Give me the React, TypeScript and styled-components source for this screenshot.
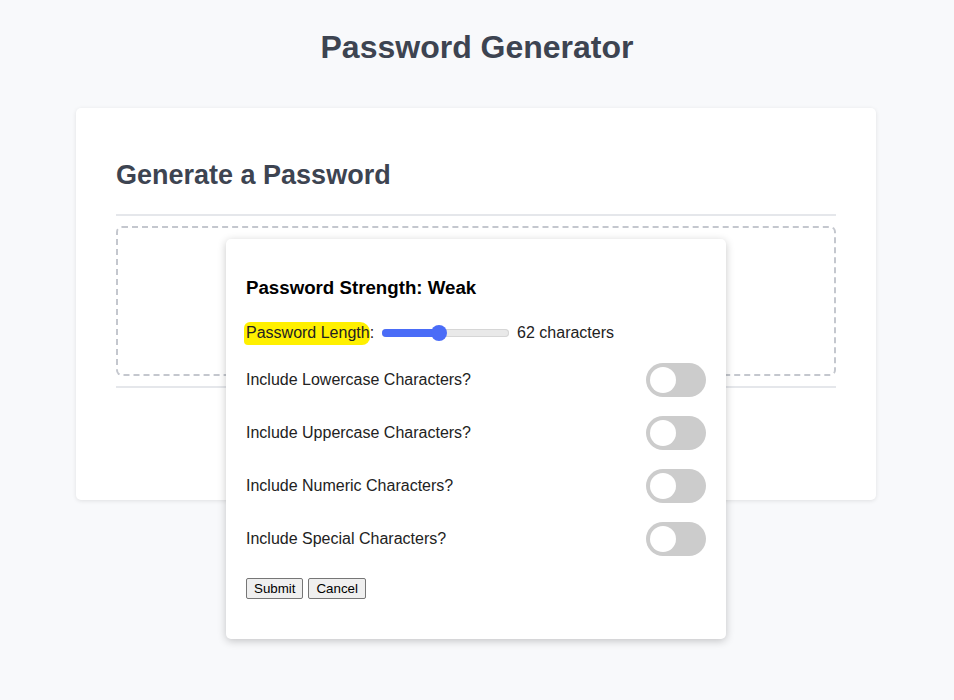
import React from "react";
import styled, { createGlobalStyle } from "styled-components";

const Global = createGlobalStyle`
  html, body { margin: 0; padding: 0; }
  body {
    background: #f8f9fb;
    font-family: "Liberation Sans", Arial, sans-serif;
    min-height: 700px;
  }
`;

const Page = styled.div`
  position: relative;
  min-height: 700px;
  padding-top: 28px;
  box-sizing: border-box;
`;

const Title = styled.h1`
  margin: 0 0 42px;
  text-align: center;
  font-size: 32px;
  line-height: 38px;
  font-weight: 700;
  color: #3d4451;
`;

const Card = styled.section`
  width: 800px;
  margin: 0 auto;
  background: #fff;
  border-radius: 5px;
  box-shadow: 0 1px 4px rgba(0, 0, 0, 0.1);
  padding: 50px 40px 112px;
  box-sizing: border-box;
  height: 392px;
  position: relative;
  left: -1px;
`;

const CardTitle = styled.h2`
  margin: 0 0 22px;
  font-size: 27px;
  line-height: 34px;
  font-weight: 700;
  color: #3d4451;
`;

const Rule = styled.hr`
  border: none;
  border-top: 2px solid #e5e7eb;
  margin: 0;
`;

const DropZone = styled.div`
  margin: 10px 0 10px;
  height: 150px;
  box-sizing: border-box;
  border: 2px dashed #c4c7ce;
  border-radius: 6px;
`;

const Dialog = styled.div`
  position: absolute;
  top: 239px;
  left: 226px;
  width: 500px;
  height: 400px;
  box-sizing: border-box;
  background: #fff;
  border-radius: 5px;
  box-shadow: 0 2px 8px rgba(0, 0, 0, 0.22);
  padding: 38px 20px 20px;
  color: #222;
`;

const Strength = styled.h3`
  margin: 0 0 22px;
  font-size: 18.7px;
  line-height: 22px;
  font-weight: 700;
  color: #000;
`;

const LengthRow = styled.div`
  display: flex;
  align-items: center;
  font-size: 16px;
  color: #222;
  height: 24px;
  margin-bottom: 18px;
`;

const Mark = styled.span`
  background: #fff000;
  margin-left: -2px;
  padding: 2px 0 3px 2px;
  border-radius: 6px 10px 8px 4px;
  color: #222;
`;

const Slider = styled.div`
  position: relative;
  width: 127px;
  height: 8px;
  margin: 0 8px;
  border-radius: 4px;
  background: #e9e9e9;
  box-shadow: inset 0 0 0 1px #d6d6d6;
`;

const Fill = styled.div`
  position: absolute;
  left: 0;
  top: 0;
  bottom: 0;
  border-radius: 4px;
  background: #4a6cf7;
`;

const Thumb = styled.div`
  position: absolute;
  top: 50%;
  width: 16px;
  height: 16px;
  margin-left: -8px;
  margin-top: -8px;
  border-radius: 50%;
  background: #4a6cf7;
`;

const OptionRow = styled.div`
  display: flex;
  align-items: center;
  justify-content: space-between;
  height: 34px;
  margin-bottom: 19px;
  font-size: 16px;
  color: #222;
`;

const Toggle = styled.span`
  position: relative;
  width: 60px;
  height: 34px;
  border-radius: 17px;
  background: #cccccc;
  flex: none;
  &::after {
    content: "";
    position: absolute;
    left: 4px;
    top: 4px;
    width: 26px;
    height: 26px;
    border-radius: 50%;
    background: #fff;
  }
`;

const Buttons = styled.div`
  display: flex;
  gap: 5px;
  margin-top: 22px;
`;

const Button = styled.button`
  font-family: "Liberation Sans", Arial, sans-serif;
  font-size: 13.33px;
  height: 21px;
  padding: 1px 7px;
  background: #efefef;
  border: 1px solid #767676;
  border-radius: 2px;
  color: #000;
`;

const options = [
  "Include Lowercase Characters?",
  "Include Uppercase Characters?",
  "Include Numeric Characters?",
  "Include Special Characters?",
];

export default function App() {
  const pct = ((62 - 8) / (128 - 8)) * 100;
  return (
    <Page>
      <Global />
      <Title>Password Generator</Title>
      <Card>
        <CardTitle>Generate a Password</CardTitle>
        <Rule />
        <DropZone />
        <Rule />
      </Card>
      <Dialog>
        <Strength>Password Strength: Weak</Strength>
        <LengthRow>
          <Mark>Password Length</Mark>:
          <Slider>
            <Fill style={{ width: `${pct}%` }} />
            <Thumb style={{ left: `${pct}%` }} />
          </Slider>
          62 characters
        </LengthRow>
        {options.map((o) => (
          <OptionRow key={o}>
            {o}
            <Toggle />
          </OptionRow>
        ))}
        <Buttons>
          <Button>Submit</Button>
          <Button>Cancel</Button>
        </Buttons>
      </Dialog>
    </Page>
  );
}
